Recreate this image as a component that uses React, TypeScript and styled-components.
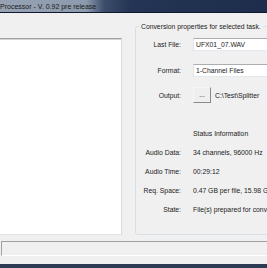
import React from 'react';
import styled, { createGlobalStyle } from 'styled-components';

const Global = createGlobalStyle`
  html, body {
    margin: 0;
    padding: 0;
    background: #f0f0f0;
    overflow: hidden;
  }
  body {
    font-family: 'Liberation Sans', Arial, sans-serif;
    font-size: 6.8px;
    color: #1b1b1b;
  }
`;

const Window = styled.div`
  width: 267px;
  height: 268px;
  display: flex;
  flex-direction: column;
  overflow: hidden;
`;

const TitleBar = styled.div`
  height: 13px;
  flex: none;
  display: flex;
  align-items: center;
  background: linear-gradient(to right, #97a3b4 0, #8d9aad 86px, #3d4e6c 104px, #243555 130px, #1d2d4b 100%);
  border-bottom: 1px solid #0f1a2e;
  box-sizing: border-box;
  font-size: 7px;
  color: #1a1a1a;
  white-space: nowrap;
`;

const Main = styled.div`
  flex: 1;
  display: flex;
  align-items: flex-start;
  gap: 13px;
`;

const ListPanel = styled.div`
  flex: none;
  width: 121px;
  height: 195px;
  margin-top: 25px;
  background: #ffffff;
  border-top: 1px solid #a0a0a0;
  border-right: 1px solid #dcdcdc;
  border-bottom: 1px solid #e3e3e3;
  box-shadow: inset 0 1px 0 #d4d4d4;
`;

const GroupBox = styled.div`
  position: relative;
  flex: none;
  width: 150px;
  height: 207px;
  margin-top: 13px;
  border: 1px solid #d5dfe5;
  border-radius: 3px;
  display: flex;
  flex-direction: column;
`;

const Caption = styled.span`
  position: absolute;
  top: -5px;
  left: 3px;
  padding: 0 2px;
  line-height: 9px;
  background: #f0f0f0;
  white-space: nowrap;
`;

const Row = styled.div<{ $top: number; $h: number }>`
  display: grid;
  grid-template-columns: 45px 1fr;
  column-gap: 12px;
  align-items: center;
  margin-top: ${p => p.$top}px;
  height: ${p => p.$h}px;
  white-space: nowrap;
  overflow: hidden;
`;

const Label = styled.span`
  text-align: right;
`;

const Field = styled.div`
  height: 13px;
  box-sizing: border-box;
  border: 1px solid #abadb3;
  border-color: #abadb3 #dbdfe6 #e3e9ef #e2e3ea;
  background: #fff;
  padding-left: 2px;
  display: flex;
  align-items: center;
`;

const OutputCell = styled.div`
  display: flex;
  align-items: center;
  gap: 4px;
`;

const DotsButton = styled.div`
  width: 18px;
  height: 16px;
  box-sizing: border-box;
  border: 1px solid;
  border-color: #f6f6f6 #8a8a8a #8a8a8a #f6f6f6;
  background: #efefef;
  display: flex;
  align-items: center;
  justify-content: center;
  padding-bottom: 2px;
`;

const StatusBar = styled.div`
  flex: none;
  height: 15px;
  margin: 0 0 8px 1px;
  box-sizing: border-box;
  border-top: 1px solid #a0a0a0;
  border-left: 1px solid #a0a0a0;
  border-bottom: 1px solid #ffffff;
  background: #f0f0f0;
`;

const Taskbar = styled.div`
  flex: none;
  height: 4px;
  background: #2c3a52;
`;

const statusRows: [string, string][] = [
  ['Audio Data:', '34 channels, 96000 Hz'],
  ['Audio Time:', '00:29:12'],
  ['Req. Space:', '0.47 GB per file, 15.98 GB total'],
  ['State:', 'File(s) prepared for conversion'],
];

export default function App() {
  return (
    <Window>
      <Global />
      <TitleBar>Processor - V. 0.92 pre release</TitleBar>
      <Main>
        <ListPanel />
        <GroupBox>
          <Caption>Conversion properties for selected task.</Caption>
          <Row $top={8} $h={19}>
            <Label>Last File:</Label>
            <Field>UFX01_07.WAV</Field>
          </Row>
          <Row $top={7} $h={19}>
            <Label>Format:</Label>
            <Field>1-Channel Files</Field>
          </Row>
          <Row $top={5} $h={20}>
            <Label>Output:</Label>
            <OutputCell>
              <DotsButton>...</DotsButton>
              <span>C:\Test\Splitter</span>
            </OutputCell>
          </Row>
          <Row $top={19} $h={18}>
            <span />
            <span>Status Information</span>
          </Row>
          {statusRows.map(([k, v]) => (
            <Row key={k} $top={1} $h={18}>
              <Label>{k}</Label>
              <span>{v}</span>
            </Row>
          ))}
        </GroupBox>
      </Main>
      <StatusBar />
      <Taskbar />
    </Window>
  );
}
